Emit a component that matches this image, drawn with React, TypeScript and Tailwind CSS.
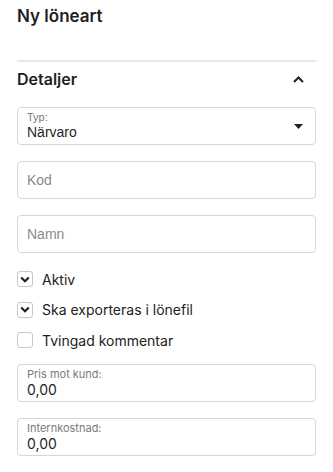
import React, { useState } from "react";

const ui = { fontFamily: "Inter, 'Liberation Sans', sans-serif" };
const field = { fontFamily: "'Liberation Sans', Arial, sans-serif" };

const TextBox = ({ placeholder }: { placeholder: string }) => (
  <div className="h-[38px] rounded-[4px] border border-[#d6d6d6] px-[9px] flex items-center">
    <input
      placeholder={placeholder}
      style={field}
      className="w-full text-[14px] outline-none placeholder:text-[#8a8a8a] text-[#222]"
    />
  </div>
);

const ValueBox = ({ label, value }: { label: string; value: string }) => (
  <div className="h-[38px] rounded-[4px] border border-[#d6d6d6] px-[9px] flex flex-col justify-center">
    <span style={ui} className="text-[11px] leading-[13px] text-[#7a7a7a]">{label}</span>
    <span style={ui} className="text-[14px] leading-[17px] text-[#1f1f1f]">{value}</span>
  </div>
);

const Check = ({ label, on }: { label: string; on: boolean }) => {
  const [checked, setChecked] = useState(on);
  return (
    <button onClick={() => setChecked(!checked)} className="h-[30.5px] flex items-center gap-[9px] text-left">
      <span className="w-[16px] h-[16px] rounded-[3px] border border-[#c8c8c8] flex items-center justify-center">
        {checked && (
          <svg width="10" height="7" viewBox="0 0 10 7">
            <path d="M1.2 1.5 L5 5.2 L8.8 1.5" fill="none" stroke="#222" strokeWidth="2.2" />
          </svg>
        )}
      </span>
      <span style={ui} className="text-[14px] text-[#222]">{label}</span>
    </button>
  );
};

export default function App() {
  return (
    <div className="w-[333px] h-[472px] overflow-hidden bg-white px-[17px]">
      <h1 style={ui} className="pt-[5px] text-[17px] leading-[22px] font-semibold text-[#1f1f1f]">Ny löneart</h1>
      <div className="mt-[33px] h-[2px] bg-[#e8e8e8]" />
      <div className="h-[34px] flex items-center justify-between pr-[12px]">
        <span style={ui} className="text-[16px] font-semibold text-[#1f1f1f]">Detaljer</span>
        <svg width="11" height="7" viewBox="0 0 11 7">
          <path d="M1 6 L5.5 1.5 L10 6" fill="none" stroke="#222" strokeWidth="2" />
        </svg>
      </div>
      <div className="mt-[11px] flex flex-col gap-[16px]">
        <div className="h-[38px] rounded-[4px] border border-[#d6d6d6] pl-[9px] pr-[12px] flex items-center justify-between">
          <div className="flex flex-col">
            <span style={field} className="text-[11px] leading-[13px] text-[#7a7a7a]">Typ:</span>
            <span style={field} className="text-[14px] leading-[17px] text-[#1f1f1f]">Närvaro</span>
          </div>
          <svg width="9" height="5" viewBox="0 0 9 5">
            <path d="M0 0 H9 L4.5 5 Z" fill="#222" />
          </svg>
        </div>
        <TextBox placeholder="Kod" />
        <TextBox placeholder="Namn" />
      </div>
      <div className="mt-[11px] flex flex-col">
        <Check label="Aktiv" on />
        <Check label="Ska exporteras i lönefil" on />
        <Check label="Tvingad kommentar" on={false} />
      </div>
      <div className="mt-[8px] flex flex-col gap-[16px]">
        <ValueBox label="Pris mot kund:" value="0,00" />
        <ValueBox label="Internkostnad:" value="0,00" />
      </div>
    </div>
  );
}
